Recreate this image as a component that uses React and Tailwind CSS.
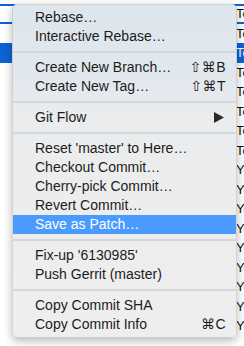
import React from 'react';

const rows = [
  { text: 'To', focus: true },
  { text: 'To' },
  { text: 'To', selected: true },
  { text: 'To' },
  { text: 'To' },
  { text: 'To' },
  { text: 'To' },
  { text: 'To' },
  { text: 'Ye' },
  { text: 'Ye' },
  { text: 'Ye' },
  { text: 'Ye' },
  { text: 'Ye' },
  { text: 'Ye' },
  { text: 'Ye' },
  { text: 'Ye' },
  { text: 'Ye' },
];

const menu = [
  [{ label: 'Rebase…' }, { label: 'Interactive Rebase…' }],
  [
    { label: 'Create New Branch…', shortcut: '⇧⌘B' },
    { label: 'Create New Tag…', shortcut: '⇧⌘T' },
  ],
  [{ label: 'Git Flow', submenu: true }],
  [
    { label: "Reset 'master' to Here…" },
    { label: 'Checkout Commit…' },
    { label: 'Cherry-pick Commit…' },
    { label: 'Revert Commit…' },
    { label: 'Save as Patch…', active: true },
  ],
  [{ label: "Fix-up '6130985'" }, { label: 'Push Gerrit (master)' }],
  [{ label: 'Copy Commit SHA' }, { label: 'Copy Commit Info', shortcut: '⌘C' }],
];

const MenuItem = ({ item }) => (
  <li
    className={`flex h-[19px] items-center justify-between pl-[22px] pr-[10px] ${
      item.active ? 'bg-[#4a9bfd] text-white' : 'text-[#1c1c1c]'
    }`}
  >
    <span>{item.label}</span>
    {item.shortcut && <span className="tracking-[0.5px]">{item.shortcut}</span>}
    {item.submenu && (
      <svg width="10" height="11" viewBox="0 0 10 11" className="mr-[2px]">
        <path d="M0 0 L10 5.5 L0 11 Z" fill="#2a2a2a" />
      </svg>
    )}
  </li>
);

export default function App() {
  return (
    <div className="relative h-[346px] w-[244px] overflow-hidden bg-white font-['Liberation_Sans','DejaVu_Sans',sans-serif]">
      <div className="pt-[4px]">
        {rows.map((row, i) => (
          <div
            key={i}
            className={`flex h-[19.5px] items-center whitespace-nowrap pl-[236px] text-[13px] ${
              row.focus ? 'border-y-2 border-[#0a63d6]' : ''
            } ${row.selected ? 'bg-[#0b63d5] text-white' : 'text-[#111]'}`}
          >
            {row.text}
          </div>
        ))}
      </div>

      <div className="absolute left-[12px] top-[4px] w-[225px] rounded-[5px] border border-black/10 bg-[linear-gradient(to_bottom,#dde5ed_0%,#e2e8ee_22%,#ebeced_34%,#eeeeee_100%)] py-[3px] text-[14px] shadow-[0_3px_10px_rgba(0,0,0,0.28)]">
        {menu.map((group, gi) => (
          <React.Fragment key={gi}>
            {gi > 0 && (
              <div className="flex h-[12px] items-center">
                <div className="h-[2px] w-full bg-[#d4d8db]" />
              </div>
            )}
            <ul>
              {group.map((item) => (
                <MenuItem key={item.label} item={item} />
              ))}
            </ul>
          </React.Fragment>
        ))}
      </div>
    </div>
  );
}
